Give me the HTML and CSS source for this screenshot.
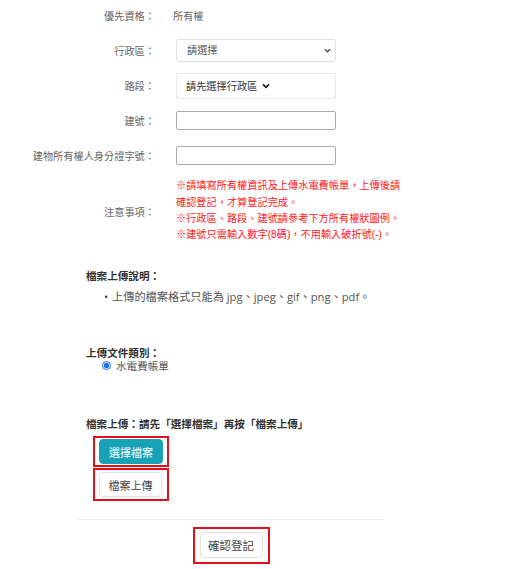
FILE: index.html
```html
<!DOCTYPE html>
<html lang="zh-Hant">
<head>
    <meta charset="UTF-8">
    <meta name="viewport" content="width=device-width, initial-scale=1.0">
    <title>所有權登記</title>
    <link rel="stylesheet" href="styles.css">
</head>
<body>
    <div class="form">
        <div class="form-row">
            <label class="form-label">優先資格：</label>
            <span class="form-value">所有權</span>
        </div>
        <div class="form-row">
            <label class="form-label" for="district">行政區：</label>
            <div class="select-wrap">
                <select id="district" class="select">
                    <option>請選擇</option>
                </select>
                <svg class="chev-thin" width="7" height="5" viewBox="0 0 7 5"><path d="M0.8 1.2 L3.5 3.8 L6.2 1.2" fill="none" stroke="#444" stroke-width="1.3"/></svg>
            </div>
        </div>
        <div class="form-row">
            <label class="form-label" for="road">路段：</label>
            <div class="road-box">
                <span>請先選擇行政區</span>
                <svg class="chev-bold" width="8" height="6" viewBox="0 0 8 6"><path d="M1 1.3 L4 4.3 L7 1.3" fill="none" stroke="#222" stroke-width="1.8"/></svg>
            </div>
        </div>
        <div class="form-row">
            <label class="form-label" for="buildNo">建號：</label>
            <input id="buildNo" class="text-input" type="text">
        </div>
        <div class="form-row">
            <label class="form-label" for="ownerId">建物所有權人身分證字號：</label>
            <input id="ownerId" class="text-input" type="text">
        </div>
        <div class="form-row form-row-notes">
            <label class="form-label">注意事項：</label>
            <div class="notes">
                ※請填寫所有權資訊及上傳水電費帳單，上傳後請<br>
                確認登記，才算登記完成。<br>
                ※行政區、路段、建號請參考下方所有權狀圖例。<br>
                ※建號只需輸入數字(8碼)，不用輸入破折號(-)。
            </div>
        </div>
    </div>

    <div class="upload">
        <div class="section-title">檔案上傳說明：</div>
        <ul class="desc-list">
            <li>上傳的檔案格式只能為 jpg、jpeg、gif、png、pdf。</li>
        </ul>

        <div class="section-title doc-title">上傳文件類別：</div>
        <label class="radio-row">
            <input type="radio" name="docType" checked>
            <span>水電費帳單</span>
        </label>

        <div class="section-title upload-title">檔案上傳：請先「選擇檔案」再按「檔案上傳」</div>
        <div class="mark">
            <button class="btn btn-info">選擇檔案</button>
        </div>
        <div class="mark mark-second">
            <button class="btn btn-light">檔案上傳</button>
        </div>

        <div class="footer">
            <div class="mark mark-confirm">
                <button class="btn btn-light btn-confirm">確認登記</button>
            </div>
        </div>
    </div>
</body>
</html>
```

FILE: styles.css
```css
body {
    margin: 0;
    background-color: #fff;
    font-family: "Liberation Sans", "Noto Sans CJK TC", sans-serif;
    font-size: 10.2px;
    color: #555;
}

.form {
    margin-top: -2px;
}

.form-row {
    display: grid;
    grid-template-columns: 155px 160px;
    column-gap: 21px;
    height: 35px;
    align-items: center;
}

.form-row-notes {
    height: 76px;
}

.form-label {
    text-align: right;
    color: #666;
}

.form-value {
    color: #666;
    margin-left: -3px;
}

.select-wrap {
    position: relative;
}

.select {
    width: 160px;
    height: 23px;
    margin: 0;
    padding: 0 0 0 10px;
    border: 1px solid #dfe3e8;
    border-radius: 3px;
    background: #fff;
    font: inherit;
    color: #555;
    appearance: none;
    -webkit-appearance: none;
    box-sizing: border-box;
}

.chev-thin {
    position: absolute;
    right: 5px;
    top: 9px;
}

.road-box {
    display: flex;
    align-items: center;
    gap: 5px;
    width: 160px;
    height: 26px;
    padding-left: 9px;
    border: 1px solid #e8e8e8;
    border-radius: 2px;
    box-sizing: border-box;
    color: #333;
}

.text-input {
    width: 160px;
    height: 19px;
    margin: 0;
    padding: 0 4px;
    border: 1px solid #a9a9a9;
    border-radius: 2px;
    box-sizing: border-box;
    font: inherit;
}

.notes {
    color: #ff1a1a;
    line-height: 16.3px;
    white-space: nowrap;
}

.upload {
    width: 306px;
    margin-left: 78px;
    margin-top: 19px;
    font-size: 10.6px;
}

.section-title {
    padding-left: 8px;
    font-weight: bold;
    color: #333;
    line-height: 17px;
}

.desc-list {
    margin: 3px 0 0;
    padding-left: 35px;
    line-height: 17px;
    color: #555;
    list-style: none;
    font-family: "Open Sans", "Noto Sans CJK TC", sans-serif;
    font-size: 11.2px;
}

.desc-list li::before {
    content: "•";
    display: inline-block;
    width: 8px;
    margin-left: -9px;
    color: #444;
}

.doc-title {
    margin-top: 41px;
    line-height: 14px;
}

.radio-row {
    display: flex;
    align-items: center;
    gap: 5px;
    margin-top: -2px;
    padding-left: 24px;
    height: 14px;
    color: #555;
}

.radio-row input {
    width: 9px;
    height: 9px;
    margin: 0;
    accent-color: #1a73e8;
}

.upload-title {
    margin-top: 45px;
    line-height: 14px;
}

.mark {
    display: inline-block;
    margin-left: 15px;
    margin-top: 5px;
    padding: 1px 4px 1px 4px;
    border: 2px solid #e3101b;
}

.mark-second {
    display: block;
    width: fit-content;
    margin-top: 1px;
    padding: 2px 5px 2px 4px;
}

.btn {
    display: block;
    width: 64px;
    height: 25px;
    padding: 0;
    font-family: inherit;
    font-size: 11px;
    border-radius: 4px;
    cursor: pointer;
}

.btn-info {
    background-color: #17a2b8;
    border: 1px solid #17a2b8;
    color: #fff;
}

.btn-light {
    background-color: #fff;
    border: 1px solid #e2e2e2;
    color: #444;
    width: 63px;
}

.footer {
    margin-top: 18px;
    border-top: 1px solid #ececec;
    display: flex;
    justify-content: center;
}

.mark-confirm {
    margin-left: 0;
    margin-top: 7px;
    padding: 3px 5px 4px 5px;
}

.btn-confirm {
    height: 26px;
    font-size: 11.5px;
}
```
